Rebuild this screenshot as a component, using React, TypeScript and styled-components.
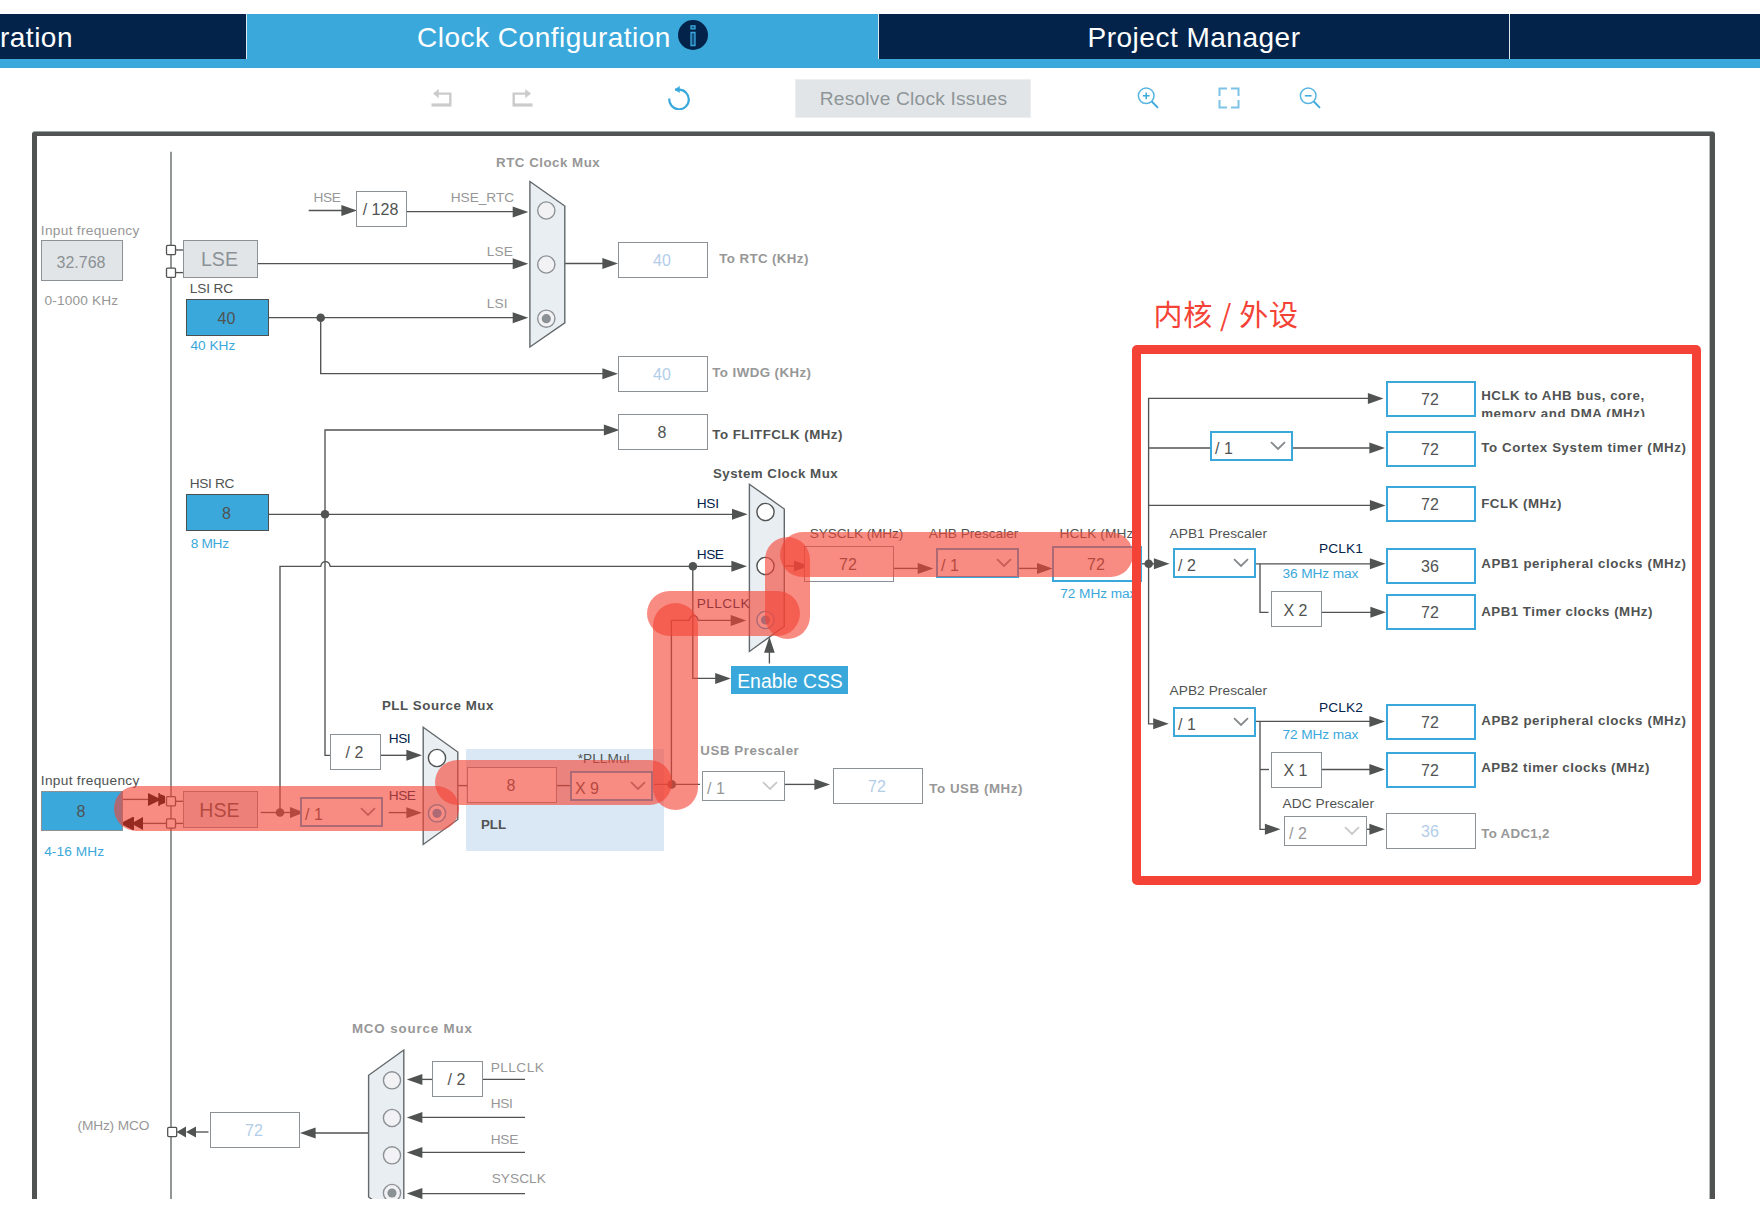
import React from "react";
import styled, { createGlobalStyle } from "styled-components";

const INK = "#505352";
const MUTED = "#979797";
const LINE = "#8c9195";
const BLUE = "#3aa8db";
const NAVY = "#03234b";
const PALE = "#b3cde8";
const DISABLED = "#e1e5e8";
const RED = "#f44336";
const SANS = '"Liberation Sans", Arial, sans-serif';
const CJK = '"Noto Sans CJK SC", sans-serif';

/* Page position of the top-left corner inside the schematic frame. */
const ORIGIN = { x: 37, y: 136 };

const GlobalStyle = createGlobalStyle`
  html, body { margin: 0; padding: 0; background: #fff; }
  body { font-family: ${SANS}; color: ${INK}; overflow: hidden; }
  *, *::before, *::after { box-sizing: border-box; }
`;

const Page = styled.div`
  display: flex;
  flex-direction: column;
  width: 1760px;
  height: 1209px;
  padding-top: 14px;
  background: #fff;
  overflow: hidden;
`;

const TabBar = styled.nav`
  display: grid;
  grid-template-columns: 247px 632px 631px 250px;
  height: 54px;
  flex: none;
  border-bottom: 9px solid ${BLUE};
`;

const Tab = styled.div<{ $active?: boolean; $clipped?: boolean }>`
  display: flex;
  align-items: center;
  justify-content: ${(p) => (p.$clipped ? "flex-end" : "center")};
  gap: 7px;
  padding: 3px ${(p) => (p.$clipped ? "173px" : "0")} 0 0;
  border-right: 1px solid #dfe6ec;
  background: ${(p) => (p.$active ? BLUE : NAVY)};
  color: #fff;
  font-size: 28px;
  line-height: 32px;
  letter-spacing: 0.5px;
  white-space: nowrap;
  overflow: hidden;
  &:last-child { border-right: 0; }
  svg { margin-top: -6px; flex: none; }
`;

const Toolbar = styled.div`
  display: flex;
  align-items: center;
  height: 64px;
  flex: none;
  padding: 0 0 4px 431px;
`;

const ToolGroup = styled.div<{ $before?: number; $gap?: number }>`
  display: flex;
  align-items: center;
  gap: ${(p) => p.$gap ?? 59}px;
  margin-left: ${(p) => p.$before ?? 0}px;
  svg { display: block; }
`;

const ResolveButton = styled.button`
  width: 236px;
  height: 39px;
  margin-left: 105px;
  padding: 2px 0 0 1px;
  border: 1px solid #eceeef;
  background: ${DISABLED};
  color: #8e9598;
  font: 19.2px ${SANS};
  letter-spacing: 0.2px;
  white-space: nowrap;
`;

const Frame = styled.main`
  position: relative;
  flex: none;
  width: 1683px;
  height: 1067px;
  margin-left: 32px;
  border: solid ${INK};
  border-width: 4px 4px 0 5px;
  border-right: 5px solid ${INK};
  border-radius: 3px 3px 0 0;
  box-shadow: inset -1px 0 0 #b9bdbf, 0 -1px 0 #9aa5a8;
  overflow: hidden;
`;

const Drawing = styled.svg`
  position: absolute;
  inset: 0;
  display: block;
  pointer-events: none;
`;

type BoxKind = "plain" | "active" | "disabled" | "source" | "sourceInput";
const boxStyle: Record<BoxKind, { bg: string; border: string }> = {
  plain: { bg: "#fff", border: `1px solid ${LINE}` },
  active: { bg: "#fff", border: `2px solid ${BLUE}` },
  disabled: { bg: DISABLED, border: `1px solid ${LINE}` },
  source: { bg: BLUE, border: "1px solid #4a4f50" },
  sourceInput: { bg: BLUE, border: `1px solid ${LINE}` },
};

const Node = styled.div<{
  $x: number; $y: number; $w: number; $h: number; $kind: BoxKind; $color: string; $size: number; $drop: number;
}>`
  position: absolute;
  left: ${(p) => p.$x - ORIGIN.x}px;
  top: ${(p) => p.$y - ORIGIN.y}px;
  width: ${(p) => p.$w}px;
  height: ${(p) => p.$h}px;
  display: flex;
  align-items: center;
  justify-content: center;
  padding: ${(p) => p.$drop}px 2px 0 0;
  background: ${(p) => boxStyle[p.$kind].bg};
  border: ${(p) => boxStyle[p.$kind].border};
  color: ${(p) => p.$color};
  font-size: ${(p) => p.$size}px;
  line-height: 18px;
  white-space: nowrap;
`;

const SelectBox = styled.div<{ $x: number; $y: number; $off?: boolean }>`
  position: absolute;
  left: ${(p) => p.$x - ORIGIN.x}px;
  top: ${(p) => p.$y - ORIGIN.y}px;
  width: 83px;
  height: 30px;
  display: flex;
  align-items: center;
  justify-content: space-between;
  padding: ${(p) => (p.$off ? "5px 6px 0 4px" : "5px 5px 0 3px")};
  background: #fff;
  border: ${(p) => (p.$off ? `1px solid ${LINE}` : `2px solid ${BLUE}`)};
  color: ${(p) => (p.$off ? MUTED : INK)};
  font-size: 16px;
  line-height: 18px;
  svg { display: block; margin-top: -5px; }
`;

const PllPanel = styled.div`
  position: absolute;
  left: ${466 - ORIGIN.x}px;
  top: ${749 - ORIGIN.y}px;
  width: 198px;
  height: 102px;
  background: #d9e8f4;
`;

const CssButton = styled.div`
  position: absolute;
  left: ${731 - ORIGIN.x}px;
  top: ${666 - ORIGIN.y}px;
  width: 117px;
  height: 28px;
  display: flex;
  align-items: center;
  justify-content: center;
  padding: 3px 0 0 1px;
  background: ${BLUE};
  color: #fff;
  font-size: 19.4px;
  white-space: nowrap;
`;

const CaptionText = styled.span<{ $x: number; $y: number; $color: string; $bold?: boolean; $cjk?: boolean; $size: number; $clip?: number }>`
  position: absolute;
  left: ${(p) => p.$x - ORIGIN.x}px;
  top: ${(p) => p.$y - ORIGIN.y}px;
  color: ${(p) => p.$color};
  font-family: ${(p) => (p.$cjk ? CJK : SANS)};
  font-size: ${(p) => p.$size}px;
  font-weight: ${(p) => (p.$bold ? 700 : 400)};
  white-space: pre;
  ${(p) => (p.$clip ? `height: ${p.$clip}px; overflow: hidden;` : "")}
`;

const Highlight = styled.div<{ $x: number; $y: number; $w: number; $h: number }>`
  position: absolute;
  left: ${(p) => p.$x - ORIGIN.x}px;
  top: ${(p) => p.$y - ORIGIN.y}px;
  width: ${(p) => p.$w}px;
  height: ${(p) => p.$h}px;
  border-radius: 22.5px;
  background: rgba(244, 67, 54, 0.62);
`;

const RedFrame = styled.div`
  position: absolute;
  left: ${1132 - ORIGIN.x}px;
  top: ${345 - ORIGIN.y}px;
  width: 569px;
  height: 540px;
  border: 9px solid ${RED};
  border-radius: 5px;
`;

/* ---------- captions, tracked out to the width they occupy ---------- */

const ctx = document.createElement("canvas").getContext("2d")!;

interface CaptionProps {
  x: number; r: number; base: number; t: string;
  c?: string; bold?: boolean; size?: number; cjk?: boolean; clip?: number;
}

function Caption({ x, r, base, t, c = INK, bold, size = bold ? 13.3 : 13.7, cjk, clip }: CaptionProps) {
  ctx.font = `${bold ? 700 : 400} ${size}px ${cjk ? CJK : SANS}`;
  const m = ctx.measureText(t);
  const ink = m.actualBoundingBoxLeft + m.actualBoundingBoxRight;
  const up = Math.round(m.fontBoundingBoxAscent);
  const down = Math.round(m.fontBoundingBoxDescent);
  return (
    <CaptionText
      $x={x + m.actualBoundingBoxLeft + (bold ? -0.4 : 0.5)}
      $y={Math.round(base) - up}
      $color={c}
      $bold={bold}
      $cjk={cjk}
      $size={size}
      $clip={clip}
      style={{ letterSpacing: (r - x - ink) / (t.length - 1), lineHeight: `${up + down}px` }}
    >
      {t}
    </CaptionText>
  );
}

const captions: CaptionProps[] = [
  { x: 41.3, r: 139, base: 235, t: "Input frequency", c: MUTED },
  { x: 44, r: 117.7, base: 305, t: "0-1000 KHz", c: MUTED },
  { x: 190.3, r: 232.7, base: 293, t: "LSI RC" },
  { x: 190, r: 235, base: 350, t: "40 KHz", c: BLUE },
  { x: 314, r: 340.3, base: 202, t: "HSE", c: MUTED },
  { x: 451.3, r: 513.7, base: 202, t: "HSE_RTC", c: MUTED },
  { x: 487.3, r: 512.3, base: 256, t: "LSE", c: MUTED },
  { x: 487.3, r: 506.3, base: 308, t: "LSI", c: MUTED },
  { x: 496.5, r: 600.7, base: 167, t: "RTC Clock Mux", c: MUTED, bold: true },
  { x: 719.7, r: 808.3, base: 263, t: "To RTC (KHz)", c: MUTED, bold: true },
  { x: 712.7, r: 811, base: 377, t: "To IWDG (KHz)", c: MUTED, bold: true },
  { x: 712.7, r: 842.3, base: 439, t: "To FLITFCLK (MHz)", bold: true },
  { x: 190.3, r: 234, base: 488, t: "HSI RC" },
  { x: 190.2, r: 228.7, base: 548, t: "8 MHz", c: BLUE },
  { x: 713.3, r: 838.7, base: 478, t: "System Clock Mux", bold: true },
  { x: 697.3, r: 717.7, base: 508, t: "HSI", c: NAVY },
  { x: 697.3, r: 723.3, base: 559, t: "HSE", c: NAVY },
  { x: 697.3, r: 749, base: 608, t: "PLLCLK", c: NAVY },
  { x: 809.3, r: 902.3, base: 538, t: "SYSCLK (MHz)" },
  { x: 928.3, r: 1018.3, base: 538, t: "AHB Prescaler" },
  { x: 1060, r: 1137, base: 538, t: "HCLK (MHz)" },
  { x: 1059.8, r: 1136, base: 598, t: "72 MHz max", c: BLUE },
  { x: 382.3, r: 494.7, base: 710, t: "PLL Source Mux", bold: true },
  { x: 389.3, r: 409.3, base: 743, t: "HSI", c: NAVY },
  { x: 389.3, r: 415.3, base: 800, t: "HSE", c: NAVY },
  { x: 41.3, r: 139, base: 785, t: "Input frequency" },
  { x: 43.7, r: 103.7, base: 856, t: "4-16 MHz", c: BLUE },
  { x: 577.3, r: 629, base: 763, t: "*PLLMul" },
  { x: 481.5, r: 506.3, base: 829, t: "PLL", bold: true },
  { x: 700.7, r: 799, base: 755, t: "USB Prescaler", c: MUTED, bold: true },
  { x: 929.7, r: 1022.3, base: 793, t: "To USB (MHz)", c: MUTED, bold: true },
  { x: 1481.6, r: 1644.3, base: 400, t: "HCLK to AHB bus, core,", bold: true },
  { x: 1481.6, r: 1645.4, base: 418, t: "memory and DMA (MHz)", bold: true, clip: 11 },
  { x: 1481.6, r: 1686, base: 452, t: "To Cortex System timer (MHz)", bold: true },
  { x: 1481.6, r: 1561.3, base: 508, t: "FCLK (MHz)", bold: true },
  { x: 1481.6, r: 1686, base: 568, t: "APB1 peripheral clocks (MHz)", bold: true },
  { x: 1481.6, r: 1652.3, base: 616, t: "APB1 Timer clocks (MHz)", bold: true },
  { x: 1481.6, r: 1686, base: 725, t: "APB2 peripheral clocks (MHz)", bold: true },
  { x: 1481.6, r: 1649.3, base: 772, t: "APB2 timer clocks (MHz)", bold: true },
  { x: 1481.6, r: 1550, base: 838, t: "To ADC1,2", c: MUTED, bold: true },
  { x: 1169, r: 1267, base: 538, t: "APB1 Prescaler" },
  { x: 1169, r: 1267, base: 695, t: "APB2 Prescaler" },
  { x: 1282, r: 1374, base: 808, t: "ADC Prescaler" },
  { x: 1319.4, r: 1361.8, base: 553, t: "PCLK1", c: NAVY },
  { x: 1319.4, r: 1361.8, base: 712, t: "PCLK2", c: NAVY },
  { x: 1282, r: 1358, base: 578, t: "36 MHz max", c: BLUE },
  { x: 1282, r: 1358, base: 739, t: "72 MHz max", c: BLUE },
  { x: 352.3, r: 473, base: 1033, t: "MCO source Mux", c: MUTED, bold: true },
  { x: 77, r: 148.2, base: 1130, t: "(MHz) MCO", c: MUTED },
  { x: 491.2, r: 543.2, base: 1072, t: "PLLCLK", c: MUTED },
  { x: 491.2, r: 511.6, base: 1108, t: "HSI", c: MUTED },
  { x: 491.2, r: 517.7, base: 1144, t: "HSE", c: MUTED },
  { x: 491.2, r: 545.2, base: 1183, t: "SYSCLK", c: MUTED },
];

interface NodeSpec { x: number; y: number; w: number; h?: number; t: string; kind?: BoxKind; c?: string; size?: number; drop?: number }
const nodes: NodeSpec[] = [
  { x: 41, y: 240, w: 82, h: 41, t: "32.768", kind: "disabled", c: "#8c9195", drop: 4 },
  { x: 183, y: 240, w: 75, h: 38, t: "LSE", kind: "disabled", c: "#8c9195", size: 19.6, drop: 0 },
  { x: 186, y: 299, w: 83, h: 37, t: "40", kind: "source", drop: 3 },
  { x: 186, y: 494, w: 83, h: 37, t: "8", kind: "source", drop: 3 },
  { x: 356, y: 191, w: 51, t: "/ 128" },
  { x: 618, y: 242, w: 90, t: "40", c: PALE },
  { x: 618, y: 356, w: 90, t: "40", c: PALE },
  { x: 618, y: 414, w: 90, t: "8", drop: 2 },
  { x: 330, y: 734, w: 51, t: "/ 2" },
  { x: 41, y: 791, w: 82, h: 40, t: "8", kind: "sourceInput", drop: 2 },
  { x: 183, y: 791, w: 75, h: 37, t: "HSE", kind: "disabled", size: 19.6 },
  { x: 467, y: 767, w: 90, t: "8" },
  { x: 833, y: 768, w: 90, t: "72", c: PALE, drop: 2 },
  { x: 804, y: 546, w: 90, t: "72", drop: 2 },
  { x: 1052, y: 546, w: 90, t: "72", kind: "active", drop: 2 },
  { x: 1386, y: 381, w: 90, t: "72", kind: "active", drop: 2 },
  { x: 1386, y: 431, w: 90, t: "72", kind: "active" },
  { x: 1386, y: 486, w: 90, t: "72", kind: "active", drop: 2 },
  { x: 1386, y: 548, w: 90, t: "36", kind: "active" },
  { x: 1386, y: 594, w: 90, t: "72", kind: "active", drop: 2 },
  { x: 1386, y: 704, w: 90, t: "72", kind: "active" },
  { x: 1386, y: 752, w: 90, t: "72", kind: "active" },
  { x: 1386, y: 813, w: 90, t: "36", c: PALE, drop: 2 },
  { x: 1271, y: 591, w: 51, t: "X 2", drop: 3 },
  { x: 1271, y: 752, w: 51, t: "X 1" },
  { x: 432, y: 1061, w: 51, t: "/ 2" },
  { x: 210, y: 1112, w: 90, t: "72", c: PALE },
];

const selects = [
  { x: 300, y: 797, t: "/ 1" },
  { x: 570, y: 771, t: "X 9" },
  { x: 702, y: 771, t: "/ 1", off: true },
  { x: 936, y: 548, t: "/ 1" },
  { x: 1210, y: 431, t: "/ 1" },
  { x: 1173, y: 548, t: "/ 2" },
  { x: 1173, y: 707, t: "/ 1" },
  { x: 1284, y: 816, t: "/ 2", off: true },
];

const highlights = [
  [114, 785.5, 345, 45], [435, 760, 237, 45], [652.5, 603, 45, 207],
  [646.7, 590.7, 153, 45], [765, 537.3, 45, 102], [780, 532.3, 353, 45],
];

/* Wires; each is a path in page coordinates. */
const wires = [
  "M308.7 210.5H345", "M407 211.6H516", "M258 263.6H516", "M269 317.6H516",
  "M320.7 317.6V373.6H606", "M565 263.5H606", "M608 430H325V755.3H330", "M269 514.3H735",
  "M280 812.5V566.3H320.7C322 560 329 560 330.2 566.3H735", "M692.8 566V678.4H718", "M769.4 663.5V650",
  "M175.7 250H183", "M175.7 272.6H183", "M175.7 801.3H183", "M175.7 823.4H183", "M123 799.4H150", "M140 823.4H166",
  "M260.7 812.5H292", "M388.7 812.6H408", "M381 755.3H408", "M458 785.6H467", "M557 785.6H570", "M654 784.4H700",
  "M671.4 784V620.4H689C690.5 614 697 614 698.2 620.4H735",
  "M785 784.4H816", "M784.3 566H796", "M894 568.4H920", "M1019 568.4H1040",
  "M1370 398.4H1148.6V723.8H1156", "M1148.6 448H1211", "M1293 448H1371", "M1148.6 505.4H1372",
  "M1142 563.8H1156", "M1256 563.8H1372", "M1260 563.8V612.3H1268.5", "M1322 612.3H1373",
  "M1256 721.4H1371", "M1260 721.4V829.3H1267", "M1260 769.5H1269", "M1322 769.5H1371", "M1367 829.3H1371",
  "M419 1079.4H432", "M483 1079.4H525", "M419 1117.4H525", "M419 1152.4H525", "M419 1193.6H525",
  "M312 1133H368.6", "M194 1132H208.5",
];

const heads: [number, number][] = [
  [357, 210.5], [528.3, 211.9], [528.3, 263.7], [528.3, 317.7], [618, 373.7], [618, 263.5], [619.5, 430],
  [747.6, 514.3], [747, 566.3], [746.3, 620.5], [730.8, 678.4], [422, 755.3], [422, 812.7],
  [830, 784.4], [933.3, 568.6], [1052.6, 568.6],
  [1383.5, 398.4], [1385, 448], [1385.5, 505.6], [1385.5, 563.8], [1386, 612.3], [1385, 721.4], [1385, 769.5], [1385, 829.3],
  [1169.5, 563.8], [1168.8, 723.8], [1280.5, 829.3],
];
const headsLeft: [number, number][] = [[406.8, 1079.4], [406.8, 1117.4], [406.8, 1152.4], [406.8, 1193.6], [300, 1133]];

const dots: [number, number][] = [
  [320.7, 317.7], [325, 514.3], [280, 812.5], [692.9, 566.3], [671.7, 784.4], [1148.7, 563.8],
];
const pins: [number, number][] = [[171, 250], [171, 272.7], [171, 801.3], [171, 823.5], [172.2, 1132]];

const muxes = [
  "529.9,181.5 564.8,206 564.8,322.8 529.9,347",
  "749.4,484.3 784.3,509 784.3,626.3 749.4,651.5",
  "423.2,727.2 457.8,752 457.8,819.5 423.2,844.5",
  "403.8,1050 368.6,1075.3 368.6,1197 403.8,1222",
];
const radios: { x: number; y: number; on?: boolean; live?: boolean }[] = [
  { x: 546.3, y: 210.5 }, { x: 546.3, y: 264.5 }, { x: 546.3, y: 318.7, on: true },
  { x: 765.5, y: 512, live: true }, { x: 765.5, y: 566, live: true }, { x: 765.5, y: 620, on: true, live: true },
  { x: 437, y: 758, live: true }, { x: 437, y: 813.3, on: true, live: true },
  { x: 392, y: 1080.3 }, { x: 392, y: 1118 }, { x: 392, y: 1155.3 }, { x: 392, y: 1193, on: true },
];

const Chevron = ({ color }: { color: string }) => (
  <svg width="16" height="10" viewBox="0 0 16 10" fill="none" stroke={color} strokeWidth="1.8">
    <path d="M1 1.2L8 8L15 1.2" />
  </svg>
);

function radioLook(r: { on?: boolean; live?: boolean }) {
  if (r.on && r.live) return { ring: BLUE, fill: "#fff", dot: BLUE };
  if (r.live) return { ring: INK, fill: "#fff", dot: INK };
  return { ring: LINE, fill: "#f2f2f4", dot: LINE };
}

function Wiring() {
  return (
    <Drawing width={1673} height={1063} viewBox={`${ORIGIN.x} ${ORIGIN.y} 1673 1063`}>
      <path d="M171 151.7V1199" stroke="#939697" strokeWidth="2" />
      <g fill="none" stroke={INK} strokeWidth="1.35">
        {wires.map((d) => <path key={d} d={d} />)}
      </g>
      <g fill="#e9eef2" stroke="#62686b" strokeWidth="1.4">
        {muxes.map((p) => <polygon key={p} points={p} />)}
      </g>
      <g fill={INK}>
        {heads.map(([x, y], i) => <path key={i} d={`M${x} ${y}l-15.6 -5.5v11z`} />)}
        {headsLeft.map(([x, y], i) => <path key={i} d={`M${x} ${y}l15.6 -5.5v11z`} />)}
        <path d="M186 1132l10 -5.5v11zM176.5 1132l9.5 -5.5v11z" />
        <path d="M769.4 636.8l-5.3 16h10.6z" />
        <path d="M290 807l14 5.5l-14 5.5zM794 560.5l15 5.5l-15 5.5z" />
        {dots.map(([x, y], i) => <circle key={i} cx={x} cy={y} r="4.3" />)}
      </g>
      <path fill="#000" d="M148 793l10.3 5v-5h1.4v1l5.3 2v7l-5.3 2v1h-1.4v-5l-10.3 5zM143 817v13l-9 -5v5h-1.4l-9.6 -5v-3l9.6 -5h1.4v5z" />
      <g fill="#fff" stroke={INK} strokeWidth="1.3">
        {pins.map(([x, y], i) => <rect key={i} x={x - 4.5} y={y - 4.6} width="9" height="9.2" rx="1" />)}
      </g>
      {radios.map((r, i) => {
        const look = radioLook(r);
        return (
          <g key={i}>
            <circle cx={r.x} cy={r.y} r="8.6" fill={look.fill} stroke={look.ring} strokeWidth="1.4" />
            {r.on && <circle cx={r.x} cy={r.y} r="4.6" fill={look.dot} />}
          </g>
        );
      })}
    </Drawing>
  );
}

const InfoIcon = () => (
  <svg width="30" height="30" viewBox="0 0 30 30">
    <circle cx="15" cy="15" r="15" fill={NAVY} />
    <path d="M13 5.8h4v3h-4zM13 12.5h4v13h-4z" fill="#14507f" stroke={BLUE} strokeWidth="1.3" />
  </svg>
);

const StepIcon = ({ flip }: { flip?: boolean }) => (
  <svg width="22" height="22" viewBox="0 0 22 22">
    <g transform={flip ? "translate(22 0) scale(-1 1)" : undefined} fill="none" stroke="#cbcbcb">
      <path d="M3 6.6H19.3V17" strokeWidth="2.4" />
      <path d="M0.5 18H20.5" strokeWidth="3.2" />
      <path d="M7.5 2.5V10.7L2.5 6.6Z" fill="#cbcbcb" strokeWidth="0.6" />
    </g>
  </svg>
);

const ResetIcon = () => (
  <svg width="22" height="24" viewBox="0 0 22 24" fill="none" stroke={BLUE} strokeWidth="2.2">
    <path d="M1.3 12.5A9.8 9.8 0 1 0 11 3.7H7" />
    <path d="M11.5 0.3L7 3.7L11.5 6.6Z" fill={BLUE} strokeWidth="0.5" />
  </svg>
);

const ZoomIcon = ({ plus }: { plus?: boolean }) => (
  <svg width="22" height="22" viewBox="0 0 22 22" fill="none" stroke={BLUE} strokeWidth="1.5">
    <circle cx="9.2" cy="8.8" r="7.8" opacity="0.85" />
    <path d="M14.8 14.5L21 20.8" strokeWidth="1.8" />
    <path d="M5.8 8.8H12.6" />
    {plus && <path d="M9.2 5.4V12.2" />}
  </svg>
);

const FitIcon = () => (
  <svg width="22" height="22" viewBox="0 0 22 22" fill="none" stroke="#7cc3e6" strokeWidth="2">
    <path d="M1.5 9V1.5H9M13 1.5H20.5V9M20.5 13V20.5H13M9 20.5H1.5V13" />
  </svg>
);

export default function App() {
  return (
    <>
      <GlobalStyle />
      <Page>
        <TabBar>
          <Tab $clipped>ration</Tab>
          <Tab $active>Clock Configuration<InfoIcon /></Tab>
          <Tab>Project Manager</Tab>
          <Tab />
        </TabBar>
        <Toolbar>
          <ToolGroup $gap={58}><StepIcon /><StepIcon flip /></ToolGroup>
          <ToolGroup $before={135}><ResetIcon /></ToolGroup>
          <ResolveButton>Resolve Clock Issues</ResolveButton>
          <ToolGroup $before={106}><ZoomIcon plus /><FitIcon /><ZoomIcon /></ToolGroup>
        </Toolbar>
        <Frame>
          <PllPanel />
          <Wiring />
          {nodes.map((n, i) => (
            <Node
              key={i} $x={n.x} $y={n.y} $w={n.w} $h={n.h ?? 36}
              $kind={n.kind ?? "plain"} $color={n.c ?? INK} $size={n.size ?? 16} $drop={n.drop ?? 1}
            >
              {n.t}
            </Node>
          ))}
          {selects.map((s, i) => (
            <SelectBox key={i} $x={s.x} $y={s.y} $off={s.off}>
              {s.t}
              <Chevron color={s.off ? "#c6c8c9" : "#85898b"} />
            </SelectBox>
          ))}
          <CssButton>Enable CSS</CssButton>
          {captions.map((c, i) => <Caption key={i} {...c} />)}
          {highlights.map(([x, y, w, h], i) => <Highlight key={i} $x={x} $y={y} $w={w} $h={h} />)}
          <RedFrame />
          <Caption x={1155} r={1296.5} base={326} t="内核 / 外设" c={RED} size={29} cjk />
        </Frame>
      </Page>
    </>
  );
}
